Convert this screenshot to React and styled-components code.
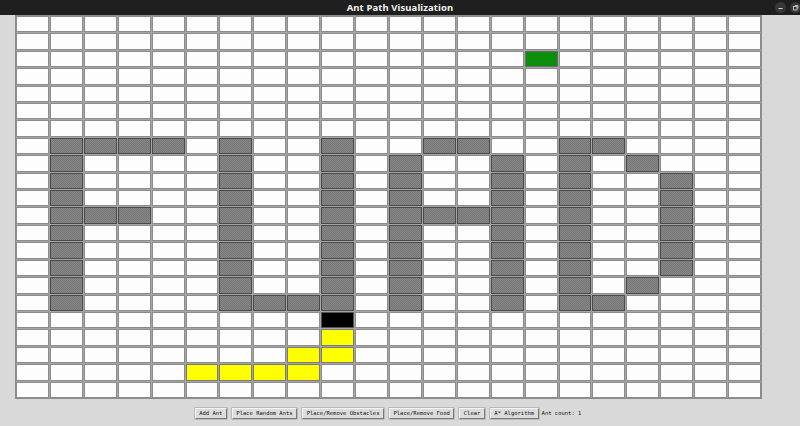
import React from "react";
import styled, { createGlobalStyle } from "styled-components";

const GlobalStyle = createGlobalStyle`
  html, body {
    margin: 0;
    padding: 0;
    background: #d9d9d9;
  }
  #root { width: 800px; height: 426px; overflow: hidden; }
`;

const ROWS = 22;
const COLS = 22;

const obstacles = [];
const addRange = (c, r0, r1) => { for (let r = r0; r <= r1; r++) obstacles.push([r, c]); };
// F
addRange(1, 7, 16);
[[7, 2], [7, 3], [7, 4], [11, 2], [11, 3]].forEach((p) => obstacles.push(p));
// U
addRange(6, 7, 16);
addRange(9, 7, 16);
[[16, 7], [16, 8]].forEach((p) => obstacles.push(p));
// A
addRange(11, 8, 16);
addRange(14, 8, 16);
[[7, 12], [7, 13], [11, 12], [11, 13]].forEach((p) => obstacles.push(p));
// D
addRange(16, 7, 16);
addRange(19, 9, 14);
[[7, 17], [16, 17], [8, 18], [15, 18]].forEach((p) => obstacles.push(p));

const cellMap = {};
obstacles.forEach(([r, c]) => { cellMap[`${r},${c}`] = "wall"; });
cellMap["2,15"] = "food";
cellMap["17,9"] = "ant";
[[18, 9], [19, 8], [19, 9], [20, 5], [20, 6], [20, 7], [20, 8]].forEach(([r, c]) => {
  cellMap[`${r},${c}`] = "path";
});

const Window = styled.div`
  width: 800px;
  height: 426px;
  display: flex;
  flex-direction: column;
  background: #d9d9d9;
`;

const TitleBar = styled.div`
  height: 15px;
  flex: 0 0 15px;
  background: #1f1f1f;
  position: relative;
  display: flex;
  align-items: center;
  justify-content: center;
`;

const Title = styled.div`
  color: #f2f2f2;
  font-family: "Noto Sans", "DejaVu Sans", sans-serif;
  font-weight: 700;
  font-size: 9.5px;
  line-height: 15px;
  letter-spacing: 0.1px;
`;

const Controls = styled.div`
  position: absolute;
  right: -1px;
  top: 2px;
  display: flex;
  gap: 4px;
`;

const CtrlBtn = styled.div`
  width: 11px;
  height: 11px;
  border-radius: 50%;
  background: #383838;
  display: flex;
  align-items: center;
  justify-content: center;
`;

const Main = styled.div`
  padding-left: 15px;
  display: flex;
`;

const Grid = styled.div`
  width: 747px;
  height: 384px;
  display: grid;
  grid-template-columns: repeat(${COLS}, 1fr);
  grid-template-rows: repeat(${ROWS}, 1fr);
  gap: 1px;
  background: #a6a6a6;
  border: 0.5px solid #8c8c8c;
  box-sizing: border-box;
`;

const cellColors = {
  empty: { bg: "#fdfdfd", border: "#8c8c8c" },
  wall: { bg: "repeating-conic-gradient(#777777 0 25%, #868686 0 50%) 0 0 / 2px 2px", border: "#4a4a4a" },
  food: { bg: "#0c8f0c", border: "#6a6a6a" },
  ant: { bg: "#000000", border: "#555555" },
  path: { bg: "#ffff00", border: "#7a7a7a" },
};

const Cell = styled.div`
  box-sizing: border-box;
  border: 1px solid ${(p) => cellColors[p.$kind].border};
  background: ${(p) => cellColors[p.$kind].bg};
`;

const Toolbar = styled.div`
  display: flex;
  align-items: center;
  justify-content: center;
  gap: 5px;
  padding-top: 9px;
  padding-right: 24px;
`;

const Button = styled.button`
  font-family: "DejaVu Sans Mono", "Liberation Mono", monospace;
  font-size: 5.5px;
  line-height: 9px;
  height: 11px;
  padding: 0 3.5px;
  margin: 0;
  color: #111;
  background: #dcdcdc;
  border: 1px solid;
  border-color: #f4f4f4 #7a7a7a #7a7a7a #f4f4f4;
  box-shadow: 0 0 0 0.5px #9a9a9a;
  border-radius: 0;
  white-space: pre;
  cursor: pointer;
`;

const Label = styled.span`
  font-family: "DejaVu Sans Mono", "Liberation Mono", monospace;
  font-size: 5.5px;
  line-height: 9px;
  color: #111;
  white-space: pre;
  margin-left: -2px;
`;

export default function App() {
  const cells = [];
  for (let r = 0; r < ROWS; r++) {
    for (let c = 0; c < COLS; c++) {
      const kind = cellMap[`${r},${c}`] || "empty";
      cells.push(<Cell key={`${r}-${c}`} $kind={kind} />);
    }
  }
  return (
    <>
      <GlobalStyle />
      <Window>
        <TitleBar>
          <Title>Ant Path Visualization</Title>
          <Controls>
            <CtrlBtn>
              <svg width="7" height="7" viewBox="0 0 7 7">
                <line x1="1.5" y1="4.5" x2="5.5" y2="4.5" stroke="#d8d8d8" strokeWidth="1" />
              </svg>
            </CtrlBtn>
            <CtrlBtn>
              <svg width="7" height="7" viewBox="0 0 7 7">
                <rect x="1.5" y="2.5" width="3.5" height="3.5" fill="none" stroke="#d8d8d8" strokeWidth="0.8" />
                <polyline points="2.8,1.5 6,1.5 6,4.6" fill="none" stroke="#d8d8d8" strokeWidth="0.8" />
              </svg>
            </CtrlBtn>
          </Controls>
        </TitleBar>
        <Main>
          <Grid>{cells}</Grid>
        </Main>
        <Toolbar>
          <Button>Add Ant</Button>
          <Button>Place Random Ants</Button>
          <Button>Place/Remove Obstacles</Button>
          <Button>Place/Remove Food</Button>
          <Button>Clear</Button>
          <Button>A* Algorithm</Button>
          <Label>Ant count: 1</Label>
        </Toolbar>
      </Window>
    </>
  );
}
